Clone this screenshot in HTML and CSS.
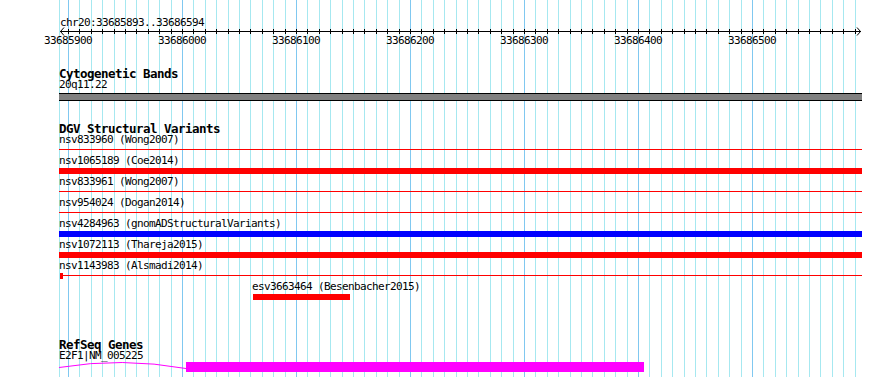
FILE: index.html
```html
<!DOCTYPE html>
<html>
<head>
  <meta charset="utf-8">
  <title>chr20:33685893..33686594</title>
  <link rel="stylesheet" href="styles.css">
</head>
<body>
  <div class="canvas">

    <!-- Ruler -->
    <svg class="ruler" width="890" height="48" viewBox="0 0 890 48">
      <defs>
        <pattern id="ticks" x="68" y="0" width="57" height="48" patternUnits="userSpaceOnUse">
          <path d="M0.5 29v5M11.5 29v5M23.5 29v5M34.5 29v5M46.5 29v5" stroke="#000" shape-rendering="crispEdges"/>
        </pattern>
      </defs>
      <text x="60" y="26">chr20:33685893..33686594</text>
      <rect x="68" y="0" width="788" height="48" fill="url(#ticks)"/>
      <path d="M60 31.5H861" stroke="#000" shape-rendering="crispEdges"/>
      <path d="M64 27.5L60.5 31.5L64 35.5M857 27.5L860.5 31.5L857 35.5" stroke="#000" fill="none"/>
      <g text-anchor="middle">
        <text x="68" y="44">33685900</text>
        <text x="182" y="44">33686000</text>
        <text x="296" y="44">33686100</text>
        <text x="410" y="44">33686200</text>
        <text x="524" y="44">33686300</text>
        <text x="638" y="44">33686400</text>
        <text x="752" y="44">33686500</text>
      </g>
    </svg>

    <!-- Cytogenetic Bands -->
    <section class="track cyto">
      <div class="track-title">Cytogenetic Bands</div>
      <div class="label">20q11.22</div>
      <div class="band"></div>
    </section>

    <!-- DGV Structural Variants -->
    <section class="track dgv">
      <div class="track-title">DGV Structural Variants</div>
      <div class="feature">
        <div class="label">nsv833960 (Wong2007)</div>
        <div class="glyph"><div class="line"></div></div>
      </div>
      <div class="feature">
        <div class="label">nsv1065189 (Coe2014)</div>
        <div class="glyph"><div class="bar"></div></div>
      </div>
      <div class="feature">
        <div class="label">nsv833961 (Wong2007)</div>
        <div class="glyph"><div class="line"></div></div>
      </div>
      <div class="feature">
        <div class="label">nsv954024 (Dogan2014)</div>
        <div class="glyph"><div class="line"></div></div>
      </div>
      <div class="feature">
        <div class="label">nsv4284963 (gnomADStructuralVariants)</div>
        <div class="glyph"><div class="bar blue"></div></div>
      </div>
      <div class="feature">
        <div class="label">nsv1072113 (Thareja2015)</div>
        <div class="glyph"><div class="bar"></div></div>
      </div>
      <div class="feature">
        <div class="label">nsv1143983 (Alsmadi2014)</div>
        <div class="glyph capped"><div class="cap"></div><div class="line"></div></div>
      </div>
      <div class="feature">
        <div class="label" style="margin-left: 193px;">esv3663464 (Besenbacher2015)</div>
        <div class="glyph"><div class="bar" style="margin-left: 194px; width: 97px;"></div></div>
      </div>
    </section>

    <!-- RefSeq Genes -->
    <section class="track refseq">
      <div class="track-title">RefSeq Genes</div>
      <div class="label gene-label">E2F1|NM_005225</div>
      <svg class="gene" width="803" height="10" viewBox="0 0 803 10">
        <path d="M0 5.5Q63 -5 127 6.5" stroke="#ff00ff" fill="none"/>
        <rect x="127" y="0" width="458" height="10" fill="#ff00ff"/>
      </svg>
    </section>

  </div>
</body>
</html>
```

FILE: styles.css
```css
body {
  margin: 0;
  background: #fff;
  color: #000;
  font-family: "DejaVu Sans Mono", monospace;
  overflow: hidden;
}
.canvas {
  margin-left: 59px;
  width: 803px;
  height: 377px;
  background-image:
    linear-gradient(90deg, #80c8f0 0 1px, transparent 1px),
    linear-gradient(90deg, #a6e8f0 0 1px, transparent 1px 11px, #a6e8f0 11px 12px, transparent 12px 23px, #a6e8f0 23px 24px, transparent 24px 34px, #a6e8f0 34px 35px, transparent 35px 46px, #a6e8f0 46px 47px, transparent 47px),
    linear-gradient(90deg, #a6e8f0 0 1px, transparent 1px);
  background-size: 114px 100%, 57px 100%, 1px 100%;
  background-position: 9px 0, 9px 0, 0 0;
  background-repeat: repeat-x, repeat-x, no-repeat;
}
.ruler {
  display: block;
  margin-left: -59px;
}
.ruler text {
  font-family: "DejaVu Sans Mono", monospace;
  font-size: 11px;
  letter-spacing: -0.62px;
  fill: #000;
}
.track-title {
  height: 13px;
  line-height: 15px;
  font-size: 12.5px;
  letter-spacing: -0.53px;
  font-weight: bold;
  white-space: nowrap;
}
.label {
  height: 13px;
  line-height: 11px;
  font-size: 11px;
  letter-spacing: -0.62px;
  white-space: nowrap;
}
.cyto {
  margin-top: 18px;
}
.band {
  height: 6px;
  margin-top: 1px;
  border-top: 1px solid #000;
  border-bottom: 1px solid #000;
  background: #808080;
}
.dgv {
  margin-top: 20px;
}
.glyph {
  display: flow-root;
  height: 8px;
}
.line {
  height: 1px;
  margin-top: 2px;
  background: #f00;
}
.bar {
  height: 6px;
  background: #f00;
}
.bar.blue {
  background: #00f;
}
.capped {
  display: flex;
  align-items: flex-start;
}
.capped .cap {
  width: 3px;
  height: 6px;
  margin-left: 1px;
  background: #f00;
}
.capped .line {
  flex: 1;
}
.refseq {
  margin-top: 35px;
}
.gene-label {
  height: 12px;
}
.gene {
  display: block;
}
```
